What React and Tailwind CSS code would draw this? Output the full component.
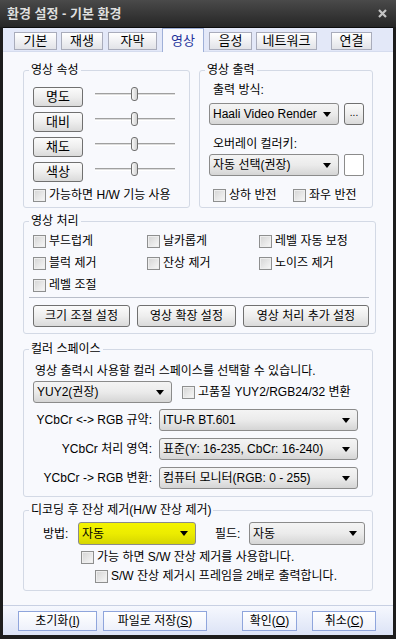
import React from "react";

const FONT = "font-['Liberation_Sans','Noto_Sans_CJK_KR',sans-serif]";

const TABS = [
  { label: "기본", w: "w-[43px]", ml: "ml-[11px]" },
  { label: "재생", w: "w-[42px]", ml: "ml-[4px]" },
  { label: "자막", w: "w-[49px]", ml: "ml-[5px]" },
  { label: "영상", w: "w-[42px]", ml: "ml-[5px]", active: true },
  { label: "음성", w: "w-[43px]", ml: "ml-[5px]" },
  { label: "네트워크", w: "w-[61px]", ml: "ml-[4px]" },
  { label: "연결", w: "w-[41px]", ml: "ml-[14px]" },
];

function Check({ label, className = "" }) {
  return (
    <div className={`flex items-center gap-[3px] h-[14px] ${className}`}>
      <span className="w-[13px] h-[13px] shrink-0 border border-[#8e8f8f] bg-linear-to-br from-[#d4d4d4] to-[#f8f8f8] shadow-[inset_0_0_0_1px_#eeeeee]" />
      <span className="whitespace-nowrap leading-[14px]">{label}</span>
    </div>
  );
}

function Select({ value, className = "", textClass = "" }) {
  return (
    <div className={`flex items-center h-[22px] border border-[#8b8b8b] rounded-[3px] bg-linear-to-b from-[#f4f4f4] via-[#ebebeb] to-[#d5d5d5] pl-[3px] pr-[7px] ${className}`}>
      <span className={`flex-1 overflow-hidden whitespace-nowrap ${textClass}`}>{value}</span>
      <svg width="8" height="5" viewBox="0 0 8 5" className="shrink-0 ml-[2px]">
        <path d="M0 0h8L4 5z" fill="#000" />
      </svg>
    </div>
  );
}

function Btn({ children, className = "" }) {
  return (
    <div className={`flex items-center justify-center border border-[#707070] rounded-[3px] bg-linear-to-b from-[#fbfbfb] via-[#eeeeee] to-[#dadada] whitespace-nowrap ${className}`}>
      {children}
    </div>
  );
}

function Slider() {
  return (
    <div className="relative w-[80px] h-[14px] flex items-center">
      <div className="w-full h-[3px] border-t border-[#a0a0a0] border-b border-b-white bg-[#dcdcdc]" />
      <div className="absolute left-[36px] top-0 w-[7px] h-[14px] rounded-[3px] border border-[#6f6f6f] bg-linear-to-r from-[#fafafa] to-[#d0d0d0]" />
    </div>
  );
}

function Group({ title, className = "", children }) {
  return (
    <fieldset className={`border border-[#d3d9e5] rounded-[3px] pl-[9px] pr-[6px] ${className}`}>
      <legend className="ml-[-4px] px-[2px] leading-[14px]">{title}</legend>
      {children}
    </fieldset>
  );
}

function FootBtn({ children, className = "" }) {
  return (
    <div className={`h-[20px] flex items-center justify-center border border-[#8fa5dc] bg-linear-to-b from-[#ffffff] to-[#eef1fb] ${className}`}>
      {children}
    </div>
  );
}

export default function App() {
  return (
    <div className={`w-[396px] h-[639px] bg-[#1d1d1d] flex flex-col text-[12px] text-black ${FONT}`}>
      <div className="h-[27px] shrink-0 flex items-center justify-between pl-[7px] pr-[9px] bg-linear-to-b from-[#4a4a4a] to-[#262626]">
        <span className="text-[13px] font-bold text-[#dedede]">환경 설정 - 기본 환경</span>
        <svg width="9" height="9" viewBox="0 0 9 9">
          <path d="M1 1l7 7M8 1L1 8" stroke="#c4c4c4" strokeWidth="2.2" />
        </svg>
      </div>

      <div className="flex-1 mx-[3px] mb-[4px] flex flex-col bg-[#f8f9fd] border-t border-[#0c0c0c]">
        <div className="h-[24px] shrink-0 flex items-end bg-[#e3e8f8] border-b border-[#d5dcee]">
          {TABS.map((t) =>
            t.active ? (
              <div
                key={t.label}
                className={`${t.w} ${t.ml} h-[24px] mb-[-1px] flex items-center justify-center bg-[#f8f9fd] border border-b-0 border-[#9fb0d8] text-[#23329a] text-[13px]`}
              >
                {t.label}
              </div>
            ) : (
              <div
                key={t.label}
                className={`${t.w} ${t.ml} h-[18px] mb-[1px] flex items-center justify-center border border-[#a9acbb] bg-linear-to-b from-[#ffffff] to-[#e2e3e8] text-[13px]`}
              >
                {t.label}
              </div>
            )
          )}
        </div>

        <div className="flex-1 flex flex-col px-[20px] pt-[11px]">
          <div className="flex gap-[9px]">
            <Group title="영상 속성" className="w-[168px] pb-[5px]">
              <div className="flex flex-col gap-[5px] pt-[10px]">
                {["명도", "대비", "채도", "색상"].map((l) => (
                  <div key={l} className="flex items-start gap-[12px]">
                    <Btn className="w-[50px] h-[20px] text-[13px]">{l}</Btn>
                    <Slider />
                  </div>
                ))}
              </div>
              <Check label="가능하면 H/W 기능 사용" className="mt-[6px]" />
            </Group>

            <Group title="영상 출력" className="w-[175px] pb-[5px]">
              <div className="ml-[4px] mt-[6px] leading-[14px]">출력 방식:</div>
              <div className="flex items-center gap-[5px] mt-[6px]">
                <Select value="Haali Video Render" className="w-[130px]" />
                <Btn className="w-[20px] h-[22px] rounded-[2px] text-[10px] pb-[4px]">...</Btn>
              </div>
              <div className="ml-[4px] mt-[12px] leading-[14px]">오버레이 컬러키:</div>
              <div className="flex items-center gap-[5px] mt-[3px]">
                <Select value="자동 선택(권장)" className="w-[130px]" />
                <div className="w-[20px] h-[22px] border border-[#8b8b8b] rounded-[2px] bg-white" />
              </div>
              <div className="flex items-center mt-[12px] ml-[4px]">
                <Check label="상하 반전" className="w-[80px]" />
                <Check label="좌우 반전" />
              </div>
            </Group>
          </div>

          <Group title="영상 처리" className="mt-[6px] pb-[6px]">
            <div className="grid grid-cols-[114px_112px_1fr] gap-y-[8px] pt-[6px]">
              <Check label="부드럽게" />
              <Check label="날카롭게" />
              <Check label="레벨 자동 보정" />
              <Check label="블럭 제거" />
              <Check label="잔상 제거" />
              <Check label="노이즈 제거" />
              <Check label="레벨 조절" />
            </div>
            <div className="h-px bg-[#b9bec9] mt-[5px] ml-[-4px] mr-[0px]" />
            <div className="flex mt-[7px] gap-[7px]">
              <Btn className="w-[97px] h-[22px]">크기 조절 설정</Btn>
              <Btn className="w-[99px] h-[22px]">영상 확장 설정</Btn>
              <Btn className="w-[126px] h-[22px]">영상 처리 추가 설정</Btn>
            </div>
          </Group>

          <Group title="컬러 스페이스" className="mt-[8px] pb-[7px]">
            <div className="ml-[2px] mt-[8px] leading-[14px]">영상 출력시 사용할 컬러 스페이스를 선택할 수 있습니다.</div>
            <div className="flex items-center mt-[3px]">
              <Select value="YUY2(권장)" className="w-[139px] h-[21px]" />
              <Check label="고품질 YUY2/RGB24/32 변환" className="ml-[10px]" />
            </div>
            {[
              ["YCbCr <-> RGB 규약:", "ITU-R BT.601", "mt-[6px]"],
              ["YCbCr 처리 영역:", "표준(Y: 16-235, CbCr: 16-240)", "mt-[7px]"],
              ["YCbCr -> RGB 변환:", "컴퓨터 모니터(RGB: 0 - 255)", "mt-[7px]"],
            ].map(([l, v, m]) => (
              <div key={l} className={`flex items-center ${m}`}>
                <span className="w-[126px] text-right pr-[7px] whitespace-nowrap">{l}</span>
                <Select value={v} className="w-[199px]" />
              </div>
            ))}
          </Group>

          <Group title="디코딩 후 잔상 제거(H/W 잔상 제거)" className="mt-[6px] pb-[7px]">
            <div className="flex items-center mt-[5px]">
              <span className="ml-[10px] w-[35px]">방법:</span>
              <div className="w-[118px] h-[23px] flex items-center border border-[#8b8b8b] rounded-[3px] bg-linear-to-b from-[#f4f400] via-[#ecec00] to-[#d6d600] pl-[3px] pr-[7px]">
                <span className="flex-1">자동</span>
                <svg width="8" height="5" viewBox="0 0 8 5">
                  <path d="M0 0h8L4 5z" fill="#000" />
                </svg>
              </div>
              <span className="ml-[19px] w-[34px]">필드:</span>
              <Select value="자동" className="w-[116px] h-[23px]" />
            </div>
            <Check label="가능 하면 S/W 잔상 제거를 사용합니다." className="ml-[48px] mt-[5px]" />
            <Check label="S/W 잔상 제거시 프레임을 2배로 출력합니다." className="ml-[62px] mt-[5px]" />
          </Group>
        </div>

        <div className="h-[30px] shrink-0 flex items-center pl-[15px] border-t border-[#c8d0e3] bg-linear-to-b from-[#f6f8fe] to-[#dce3f6]">
          <FootBtn className="w-[79px]">초기화(<u>I</u>)</FootBtn>
          <FootBtn className="w-[104px] ml-[6px]">파일로 저장(<u>S</u>)</FootBtn>
          <FootBtn className="w-[55px] ml-[35px]">확인(<u>O</u>)</FootBtn>
          <FootBtn className="w-[64px] ml-[15px]">취소(<u>C</u>)</FootBtn>
        </div>
      </div>
    </div>
  );
}
